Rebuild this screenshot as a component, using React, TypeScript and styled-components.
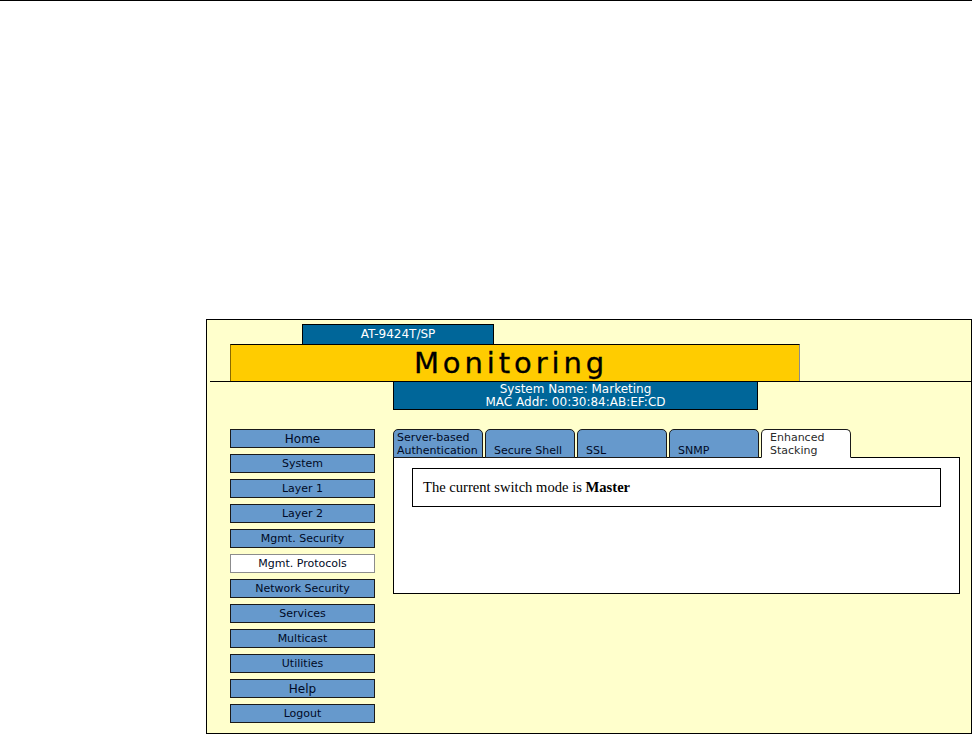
import React from "react";
import styled, { createGlobalStyle } from "styled-components";

const GlobalStyle = createGlobalStyle`
  html, body { margin: 0; padding: 0; background: #ffffff; }
  body { font-family: "DejaVu Sans", Verdana, sans-serif; }
  * { box-sizing: border-box; }
`;

const Page = styled.div`
  border-top: 1px solid #000;
  width: 972px;
  min-height: 734px;
  padding-top: 318px;
  padding-left: 206px;
`;

const Frame = styled.div`
  width: 766px;
  height: 415px;
  border: 1px solid #000;
  background: #ffffcc;
  display: flex;
  flex-direction: column;
`;

const ModelTab = styled.div`
  margin-top: 4px;
  margin-left: 95px;
  width: 192px;
  height: 20px;
  border: 1px solid #000;
  border-bottom: none;
  background: #006699;
  color: #fff;
  font-size: 12px;
  line-height: 19px;
  text-align: center;
`;

const Banner = styled.div`
  margin-left: 23px;
  width: 570px;
  height: 37px;
  border-top: 1px solid #000;
  border-left: 1px solid #8a6a00;
  border-right: 1px solid #8c8c8c;
  background: #ffcc00;
  color: #000;
  font-size: 29px;
  letter-spacing: 3.9px;
  line-height: 36px;
  text-align: center;
  padding-right: 8px;
  -webkit-text-stroke: 0.3px #000;
`;

const Divider = styled.div`
  margin-left: 3px;
  height: 1px;
  background: #000;
`;

const SysBox = styled.div`
  margin-left: 186px;
  width: 365px;
  height: 28px;
  border: 1px solid #000;
  border-top: none;
  background: #006699;
  color: #fff;
  font-size: 12px;
  line-height: 13px;
  text-align: center;
  padding-top: 1px;
`;

const Main = styled.div`
  margin-top: 19px;
  margin-left: 23px;
  display: flex;
  gap: 18px;
  align-items: flex-start;
`;

const Nav = styled.div`
  width: 145px;
  display: flex;
  flex-direction: column;
  gap: 6px;
`;

const NavButton = styled.div<{ $active?: boolean; $big?: boolean }>`
  height: 19px;
  border: 1px solid ${(p) => (p.$active ? "#8c8c8c" : "#1a1a1a")};
  background: ${(p) => (p.$active ? "#ffffff" : "#6699cc")};
  color: #000a26;
  font-size: ${(p) => (p.$big ? "12px" : "11px")};
  line-height: 18px;
  text-align: center;
  white-space: nowrap;
`;

const TabArea = styled.div`
  width: 567px;
  display: flex;
  flex-direction: column;
`;

const TabRow = styled.div`
  display: flex;
  gap: 2px;
  height: 28px;
  position: relative;
  z-index: 1;
`;

const Tab = styled.div<{ $active?: boolean; $tight?: boolean }>`
  width: 90px;
  height: 29px;
  border: 1px solid #1a1a1a;
  border-bottom: 1px solid ${(p) => (p.$active ? "#ffffff" : "#1a1a1a")};
  border-radius: 5px 5px 0 0;
  background: ${(p) => (p.$active ? "#ffffff" : "#6699cc")};
  color: ${(p) => (p.$active ? "#2a2a2a" : "#000a26")};
  font-size: 11px;
  line-height: 13px;
  padding-left: ${(p) => (p.$tight ? "3px" : "8px")};
  padding-bottom: 0;
  display: flex;
  flex-direction: column;
  justify-content: flex-end;
  white-space: nowrap;
`;

const Panel = styled.div`
  height: 137px;
  border: 1px solid #000;
  background: #ffffff;
  padding: 10px 18px 0 18px;
`;

const ModeBox = styled.div`
  height: 39px;
  border: 1px solid #000;
  padding-left: 10px;
  display: flex;
  align-items: center;
  font-family: "Liberation Serif", "Times New Roman", serif;
  font-size: 14.6px;
  color: #000;

  b {
    font-weight: bold;
    white-space: pre;
  }
`;

const navItems: { label: string; big?: boolean; active?: boolean }[] = [
  { label: "Home", big: true },
  { label: "System" },
  { label: "Layer 1" },
  { label: "Layer 2" },
  { label: "Mgmt. Security" },
  { label: "Mgmt. Protocols", active: true },
  { label: "Network Security" },
  { label: "Services" },
  { label: "Multicast" },
  { label: "Utilities" },
  { label: "Help", big: true },
  { label: "Logout" },
];

const tabs: { lines: string[]; tight?: boolean; active?: boolean }[] = [
  { lines: ["Server-based", "Authentication"], tight: true },
  { lines: ["Secure Shell"] },
  { lines: ["SSL"] },
  { lines: ["SNMP"] },
  { lines: ["Enhanced", "Stacking"], active: true },
];

export default function App() {
  return (
    <>
      <GlobalStyle />
      <Page>
        <Frame>
          <ModelTab>AT-9424T/SP</ModelTab>
          <Banner>Monitoring</Banner>
          <Divider />
          <SysBox>
            <div>System Name: Marketing</div>
            <div>MAC Addr: 00:30:84:AB:EF:CD</div>
          </SysBox>
          <Main>
            <Nav>
              {navItems.map((n) => (
                <NavButton key={n.label} $big={n.big} $active={n.active}>
                  {n.label}
                </NavButton>
              ))}
            </Nav>
            <TabArea>
              <TabRow>
                {tabs.map((t) => (
                  <Tab key={t.lines.join(" ")} $tight={t.tight} $active={t.active}>
                    {t.lines.map((l) => (
                      <div key={l}>{l}</div>
                    ))}
                  </Tab>
                ))}
              </TabRow>
              <Panel>
                <ModeBox>
                  The current switch mode is&nbsp;<b>Master</b>
                </ModeBox>
              </Panel>
            </TabArea>
          </Main>
        </Frame>
      </Page>
    </>
  );
}
